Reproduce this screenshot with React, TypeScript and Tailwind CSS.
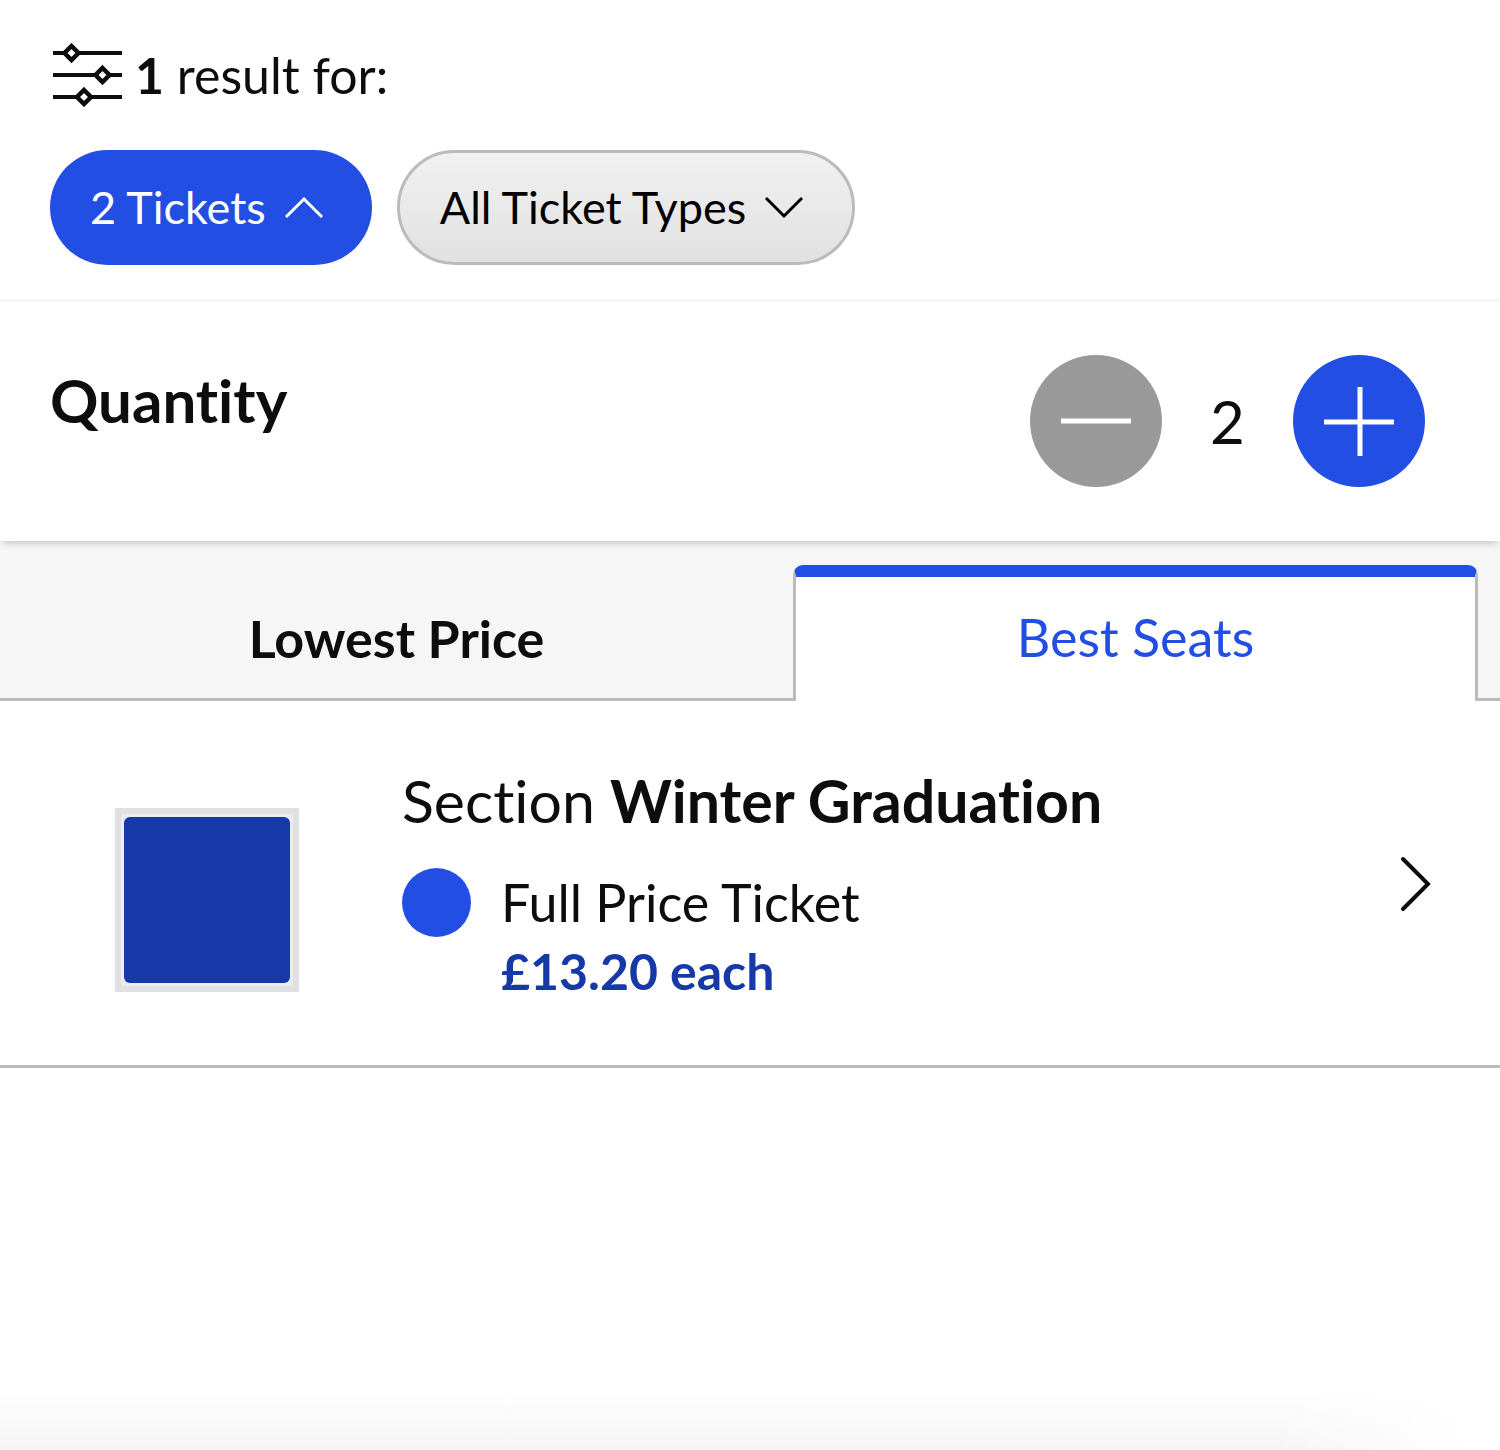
import React, { useState } from "react";

type Tab = "lowest" | "best";

const MIN_TICKETS = 2;

// Three slider lines with diamond handles
const FilterIcon: React.FC = () => (
  <svg className="h-16 w-[70px]" viewBox="0 0 70 64" fill="none" aria-hidden="true">
    <path d="M0 10h69M0 32h69M0 54h69" stroke="#0d0d0d" strokeWidth="4" />
    <g fill="#fff" stroke="#0d0d0d" strokeWidth="4.500">
      <path d="M18.500 3l7 7-7 7-7-7z" />
      <path d="M49.500 25l7 7-7 7-7-7z" />
      <path d="M31 47l7 7-7 7-7-7z" />
    </g>
  </svg>
);

const ChevronIcon: React.FC<{ up?: boolean }> = ({ up }) => (
  <svg className="h-6 w-10" viewBox="0 0 40 24" fill="none" aria-hidden="true">
    <path
      d={up ? "M2 21L20 3l18 18" : "M2 2l18 18L38 2"}
      stroke="currentColor"
      strokeWidth="3"
    />
  </svg>
);

const App: React.FC = () => {
  const [quantity, setQuantity] = useState(MIN_TICKETS);
  const [showQuantity, setShowQuantity] = useState(true);
  const [tab, setTab] = useState<Tab>("best");

  // The selected tab is raised, the other one stays on the grey bar
  const getTabClass = (name: Tab): string => {
    return tab === name
      ? "mt-6 h-[136px] rounded-t-[10px] border-x-[3px] border-t-[12px] border-x-[#bbb] border-t-[#224ee3] bg-white pb-1 text-[#224ee3]"
      : "h-40 border-b-[3px] border-[#bbb] pt-9 font-bold";
  };

  return (
    <main className="flex min-h-screen flex-col bg-white font-['Lato',sans-serif] text-[#0d0d0d] [font-variant-ligatures:none]">
      {/* Filters */}
      <header className="border-b-[3px] border-[#f5f5f5] px-[50px] pt-[43px] pb-[34px]">
        <div className="flex items-center gap-3 pl-[3px]">
          <FilterIcon />
          <p className="text-[50px] leading-[64px]">
            <strong>1</strong> result for:
          </p>
        </div>
        <div className="mt-[43px] flex gap-[25px]">
          <button
            className="flex h-[115px] items-center gap-[18px] rounded-full bg-[#224ee3] pr-12 pl-10 text-[45px] text-white"
            aria-expanded={showQuantity}
            onClick={() => setShowQuantity(!showQuantity)}
          >
            {quantity} Tickets
            <ChevronIcon up={showQuantity} />
          </button>
          <button className="flex h-[115px] items-center gap-[18px] rounded-full border-[3px] border-[#bbb] bg-linear-to-b from-[#f1f1f1] to-[#e1e1e1] pr-12 pl-10 text-[45px] text-black">
            All Ticket Types
            <ChevronIcon />
          </button>
        </div>
      </header>

      {/* Quantity picker */}
      {showQuantity && (
        <section className="relative z-10 flex items-start justify-between bg-white pt-[53px] pr-[75px] pb-[54px] pl-[50px] shadow-[0_5px_7px_-3px_rgba(0,0,0,0.22)]">
          <h2 className="text-[60px] leading-[90px] font-bold">Quantity</h2>
          <div className="flex items-center">
            <button
              className="flex size-[132px] items-center justify-center rounded-full bg-[#999] text-white"
              aria-label="Remove ticket"
              disabled={quantity === MIN_TICKETS}
              onClick={() => setQuantity(quantity - 1)}
            >
              <svg className="size-[70px]" viewBox="0 0 70 70" aria-hidden="true">
                <path d="M0 35h70" stroke="currentColor" strokeWidth="5" />
              </svg>
            </button>
            <output className="w-[131px] text-center text-[60px]">{quantity}</output>
            <button
              className="flex size-[132px] items-center justify-center rounded-full bg-[#224ee3] text-white"
              aria-label="Add ticket"
              onClick={() => setQuantity(quantity + 1)}
            >
              <svg className="size-[70px]" viewBox="0 0 70 70" aria-hidden="true">
                <path d="M0 36h70M36 1v69" stroke="currentColor" strokeWidth="5" />
              </svg>
            </button>
          </div>
        </section>
      )}

      {/* Sort tabs */}
      <div className="grid grid-cols-[793fr_685fr_22px] bg-[#f6f6f6] text-[52px]" role="tablist">
        <button
          role="tab"
          aria-selected={tab === "lowest"}
          className={getTabClass("lowest")}
          onClick={() => setTab("lowest")}
        >
          Lowest Price
        </button>
        <button
          role="tab"
          aria-selected={tab === "best"}
          className={getTabClass("best")}
          onClick={() => setTab("best")}
        >
          Best Seats
        </button>
        <div className="border-b-[3px] border-[#bbb]" />
      </div>

      {/* Ticket result */}
      <button className="flex items-center border-b-[3px] border-[#bbb] pt-[65px] pr-[68px] pb-[59px] pl-[115px] text-left">
        <span className="mt-7 size-[184px] border-[6px] border-[#e0e0e0] bg-[#e9edf3] p-[3px]">
          <span className="block size-full rounded-md bg-[#1739a7]" />
        </span>
        <span className="ml-[103px] flex-1">
          <span className="block text-[59px] leading-[70px]">
            Section <strong>Winter Graduation</strong>
          </span>
          <span className="mt-8 flex items-start gap-[30px]">
            <span className="size-[69px] rounded-full bg-[#224ee3]" />
            <span>
              <span className="block text-[52px] leading-[69px]">Full Price Ticket</span>
              <strong className="block text-[50px] leading-[69px] text-[#1739a7]">£13.20 each</strong>
            </span>
          </span>
        </span>
        <svg className="mb-1 h-14 w-8" viewBox="0 0 32 56" fill="none" aria-hidden="true">
          <path d="M3 3l25 25L3 53" stroke="#0d0d0d" strokeWidth="4" strokeLinecap="round" />
        </svg>
      </button>

      <div className="mt-auto h-[60px] bg-linear-to-b from-white to-[#f5f5f5] mask-r-from-85% mask-r-to-98%" />
    </main>
  );
};

export default App;
